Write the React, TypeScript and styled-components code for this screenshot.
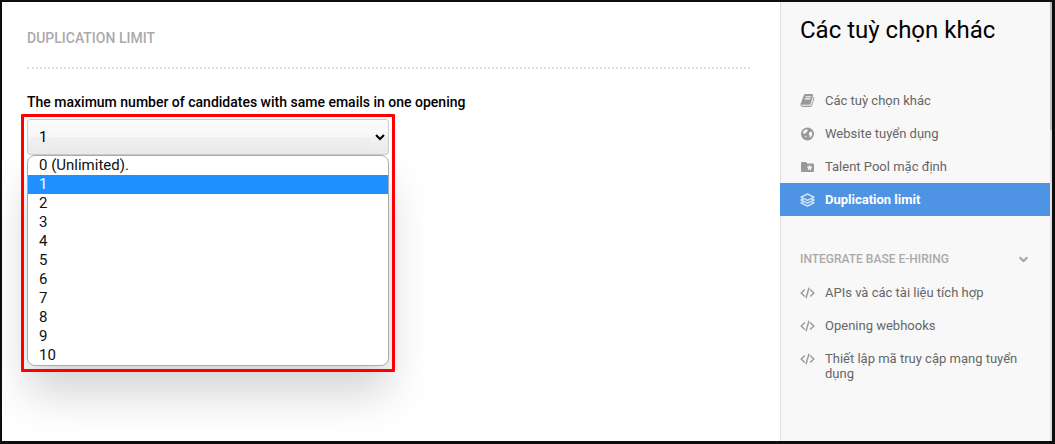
import React, { useState } from 'react';
import styled, { createGlobalStyle } from 'styled-components';
import { FiChevronDown } from 'react-icons/fi';

const GlobalStyle = createGlobalStyle`
  *, *::before, *::after { box-sizing: border-box; }
  html, body { margin: 0; height: 100%; }
  #root { height: 100%; }
  body { font-family: Roboto, "Liberation Sans", sans-serif; font-size: 13px; color: #000; background: #fff; }
`;

const Page = styled.div`
  display: flex;
  min-height: 100%;
  border: solid #0e0e0e;
  border-width: 2px 3px 3px 2px;
  overflow: hidden;
`;

const Main = styled.main`
  flex: 1;
  min-width: 0;
  padding: 28px 30px 0 25px;
`;

const SectionTitle = styled.h2`
  margin: 0;
  padding-bottom: 21px;
  border-bottom: 2px dotted #ddd;
  font-size: 14px;
  line-height: 16px;
  font-weight: 500;
  text-transform: uppercase;
  color: #aaa;
`;

const FieldLabel = styled.label`
  display: block;
  margin: 25px 0 9px;
  font-size: 14px;
  line-height: 16px;
  font-weight: 500;
`;

const Field = styled.div`
  position: relative;
  width: 100%;
  max-width: 362px;
`;

const Select = styled.select`
  display: block;
  width: 100%;
  height: 36px;
  padding: 0 8px 0 7px;
  border: 1px solid #ccc;
  border-radius: 3px;
  background: linear-gradient(#fcfcfc, #f6f6f6 50%, #f0f0f0 50%, #ececec);
  font-family: inherit;
  font-size: 15px;
  color: #000;
  outline: none;
`;

const Options = styled.ul`
  position: absolute;
  top: 100%;
  left: 0;
  right: 0;
  margin: 0;
  padding: 0;
  list-style: none;
  border: 1px solid #aaa;
  border-radius: 8px;
  overflow: hidden;
  background: #fff;
  box-shadow: 0 28px 44px rgba(0, 0, 0, 0.17);
`;

const Option = styled.li<{ $selected: boolean }>`
  padding: 0 11px;
  font-size: 15px;
  line-height: 19px;
  color: ${(p) => (p.$selected ? '#fff' : '#111')};
  background: ${(p) => (p.$selected ? '#1e90ff' : 'transparent')};
`;

const Highlight = styled.div`
  position: absolute;
  top: -5px;
  left: -6px;
  right: -6px;
  height: 258px;
  border: 3px solid #f00;
  border-radius: 1px;
  pointer-events: none;
`;

const Sidebar = styled.aside`
  flex: none;
  width: 270px;
  background: #f8f8f8;
  box-shadow: inset 1px 0 #ddd;
`;

const SidebarTitle = styled.h1`
  margin: 0;
  padding: 14px 20px 40px;
  font-size: 24px;
  line-height: 28px;
  font-weight: 400;
`;

const Menu = styled.nav`
  display: flex;
  flex-direction: column;
`;

const MenuLink = styled.a<{ $active?: boolean }>`
  display: flex;
  gap: 10px;
  padding: 9px 20px;
  line-height: 15px;
  text-decoration: none;
  font-weight: ${(p) => (p.$active ? 700 : 400)};
  color: ${(p) => (p.$active ? '#fff' : '#666')};
  background: ${(p) => (p.$active ? '#4f94e4' : 'transparent')};

  svg {
    flex: none;
    width: 15px;
    height: 15px;
    color: ${(p) => (p.$active ? '#d3e4f8' : '#999')};
  }
`;

const GroupToggle = styled.button`
  display: flex;
  align-items: center;
  justify-content: space-between;
  width: 100%;
  margin: 35px 0 8px;
  padding: 0 20px;
  border: 0;
  background: none;
  font-family: inherit;
  font-size: 12px;
  line-height: 17px;
  font-weight: 500;
  text-transform: uppercase;
  color: #aaa;

  svg {
    width: 13px;
    height: 13px;
    stroke-width: 4;
  }
`;

const ScrollTrack = styled.div`
  flex: none;
  width: 2px;
  background: #e2e2e4;
`;

const ScrollThumb = styled.div`
  height: 128px;
  background: #c1c1c1;
`;

const BookIcon = () => (
  <svg viewBox="0 0 1792 1792" fill="currentColor" aria-hidden="true">
    <path d="M1703 478q40 57 18 129l-275 906q-19 64-76.5 107.5t-122.5 43.5h-923q-77 0-148.500-53.500t-99.500-131.500q-24-67-2-127 0-4 3-27t4-37q1-8-3-21.500t-3-19.500q2-11 8-21t16.500-23.500 16.500-23.500q23-38 45-91.500t30-91.500q3-10 .5-30t-.5-28q3-11 17-28t17-23q21-36 42-92t25-90q1-9-2.500-32t.5-28q4-13 22-30.500t22-22.500q19-26 42.500-84.500t27.500-96.500q1-8-3-25.500t-2-26.500q2-8 9-18t18-23 17-21q8-12 16.500-30.500t15-35 16-36 19.500-32 26.500-23.500 36-11.500 47.500 5.500l-1 3q38-9 51-9h761q74 0 114 56t18 130l-274 906q-36 119-71.500 153.500t-128.500 34.500h-869q-27 0-38 15-11 16-1 43 24 70 144 70h923q29 0 56-15.500t35-41.500l300-987q7-22 5-57 38 15 59 43zm-1064 2q-4 13 2 22.500t20 9.500h608q13 0 25.500-9.500t16.500-22.500l21-64q4-13-2-22.500t-20-9.500h-608q-13 0-25.500 9.500t-16.500 22.500zm-83 256q-4 13 2 22.500t20 9.500h608q13 0 25.500-9.500t16.500-22.500l21-64q4-13-2-22.500t-20-9.500h-608q-13 0-25.500 9.500t-16.500 22.500z" />
  </svg>
);

const GlobeIcon = () => (
  <svg viewBox="0 0 15 15" aria-hidden="true">
    <circle cx="7.500" cy="8" r="6.500" fill="currentColor" />
    <path fill="#f8f8f8" d="M3.400 5.400 5.400 3.600 7.400 3.400 8 4.400 6.600 5.800 6.200 7 5 7.200 4 8 3 7ZM9.600 6.200 11 5.600 12.200 6.800 12 9.200 10.600 11.200 9.800 11.400 9.800 9.600 8.600 8.400ZM5 9.800 6.400 10 6.400 10.800 5.800 11.800Z" />
  </svg>
);

const FolderStarIcon = () => (
  <svg viewBox="0 0 15 15" aria-hidden="true">
    <path fill="currentColor" d="M2.300 3H6l1.500 1.500h5.200c.8 0 1.300.5 1.300 1.300v5.900c0 .8-.5 1.300-1.300 1.300H2.300C1.500 13 1 12.500 1 11.700V4.300C1 3.500 1.500 3 2.300 3Z" />
    <path fill="#f8f8f8" d="m9.600 5.600.8 2 2.200.2-1.700 1.400.6 2.200-1.900-1.200-1.900 1.200.6-2.200-1.700-1.400 2.200-.2Z" />
  </svg>
);

const LayersIcon = () => (
  <svg viewBox="0 0 15 15" fill="none" stroke="currentColor" strokeWidth="1.400" strokeLinejoin="round" strokeLinecap="round" aria-hidden="true">
    <path d="M7.500 2 14 5.200 7.500 8.400 1 5.200Z" />
    <path d="M3 7 1 8 7.500 11.200 14 8 12 7" />
    <path d="M3 9.800 1 10.800 7.500 14 14 10.800 12 9.800" />
  </svg>
);

const CodeIcon = () => (
  <svg viewBox="0 0 15 15" fill="none" stroke="currentColor" strokeWidth="1.400" aria-hidden="true">
    <path d="M4.800 4.500 1.200 8l3.600 3.500M10.200 4.500 13.800 8l-3.600 3.500M9 2.800 6 13.200" />
  </svg>
);

const limits = ['0 (Unlimited).', '1', '2', '3', '4', '5', '6', '7', '8', '9', '10'];

export default function App() {
  const [limit, setLimit] = useState('1');
  return (
    <>
      <GlobalStyle />
      <Page>
        <Main>
          <SectionTitle>Duplication limit</SectionTitle>
          <FieldLabel htmlFor="limit">The maximum number of candidates with same emails in one opening</FieldLabel>
          <Field>
            <Select id="limit" value={limit} onChange={(e) => setLimit(e.target.value)}>
              {limits.map((l) => <option key={l}>{l}</option>)}
            </Select>
            <Options role="listbox" aria-label="Limit">
              {limits.map((l) => (
                <Option key={l} role="option" aria-selected={l === limit} $selected={l === limit} onClick={() => setLimit(l)}>
                  {l}
                </Option>
              ))}
            </Options>
            <Highlight />
          </Field>
        </Main>
        <Sidebar>
          <SidebarTitle>Các tuỳ chọn khác</SidebarTitle>
          <Menu>
            <MenuLink href="#options"><BookIcon />Các tuỳ chọn khác</MenuLink>
            <MenuLink href="#website"><GlobeIcon />Website tuyển dụng</MenuLink>
            <MenuLink href="#pool"><FolderStarIcon />Talent Pool mặc định</MenuLink>
            <MenuLink href="#duplication" $active aria-current="page"><LayersIcon />Duplication limit</MenuLink>
          </Menu>
          <GroupToggle type="button" aria-expanded="true">
            Integrate Base E-Hiring
            <FiChevronDown />
          </GroupToggle>
          <Menu>
            <MenuLink href="#apis"><CodeIcon />APIs và các tài liệu tích hợp</MenuLink>
            <MenuLink href="#webhooks"><CodeIcon />Opening webhooks</MenuLink>
            <MenuLink href="#access"><CodeIcon />Thiết lập mã truy cập mạng tuyển dụng</MenuLink>
          </Menu>
        </Sidebar>
        <ScrollTrack><ScrollThumb /></ScrollTrack>
      </Page>
    </>
  );
}
